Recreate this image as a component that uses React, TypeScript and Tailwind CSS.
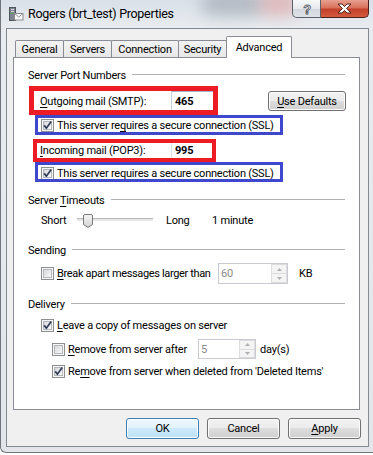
import React, { useId } from 'react';

// underline for access keys
const Ul: React.FC<{ children: React.ReactNode }> = ({ children }) => (
  <span className="underline decoration-1 underline-offset-[2px]">{children}</span>
);

const CheckBox: React.FC<{ checked?: boolean; className?: string }> = ({ checked, className }) => {
  const id = useId();
  return (
    <svg width="13" height="13" viewBox="0 0 13 13" className={`shrink-0 ${className ?? ''}`}>
      <defs>
        <linearGradient id={id} x1="0" y1="0" x2="1" y2="1">
          <stop offset="0" stopColor="#d4d6d9" />
          <stop offset="1" stopColor="#fbfbfb" />
        </linearGradient>
      </defs>
      <rect x="0.5" y="0.5" width="12" height="12" fill="#f6f6f6" stroke="#8e8f8f" />
      <rect x="2.5" y="2.5" width="8" height="8" fill={`url(#${id})`} stroke="#b4b8bd" />
      {checked && (
        <path d="M3.2 6.4 L5.4 9.2 L10.2 2.6" fill="none" stroke="#2f3a58" strokeWidth="1.7" />
      )}
    </svg>
  );
};

const Btn: React.FC<{ className?: string; primary?: boolean; children: React.ReactNode }> = ({
  className,
  primary,
  children,
}) => (
  <div
    className={`flex items-center justify-center rounded-[3px] border shadow-[inset_0_0_0_1px_#fcfcfc] ${
      primary
        ? 'border-[#3c7fb1] bg-[linear-gradient(180deg,#eef8fe_0%,#e0f2fc_50%,#cdeafb_50%,#bde1f5_100%)]'
        : 'border-[#707070] bg-[linear-gradient(180deg,#f2f2f2_0%,#ebebeb_50%,#dddddd_50%,#cfcfcf_100%)]'
    } ${className ?? ''}`}
  >
    {children}
  </div>
);

const SpinBox: React.FC<{ value: string; className?: string }> = ({ value, className }) => (
  <div className={`flex border border-[#c9cbd0] bg-white ${className ?? ''}`}>
    <span className="flex-1 flex items-center pl-[2px] text-[#8a8a8a]">{value}</span>
    <div className="w-[16px] flex flex-col">
      <div className="flex-1 flex items-center justify-center border border-[#dcdcdc] bg-[#f4f4f4]">
        <svg width="5" height="3" viewBox="0 0 5 3">
          <path d="M0 3 L2.5 0 L5 3 Z" fill="#b0b0b0" />
        </svg>
      </div>
      <div className="flex-1 flex items-center justify-center border border-t-0 border-[#dcdcdc] bg-[#f4f4f4]">
        <svg width="5" height="3" viewBox="0 0 5 3">
          <path d="M0 0 L2.5 3 L5 0 Z" fill="#b0b0b0" />
        </svg>
      </div>
    </div>
  </div>
);

const GroupHead: React.FC<{ className: string; children: React.ReactNode }> = ({ className, children }) => (
  <div className={`flex items-center h-[14px] pl-[14px] pr-[14px] ${className}`}>
    <span>{children}</span>
    <div className="flex-1 h-px bg-[#b0b0b0] ml-[6px] -mt-[1px]" />
  </div>
);

const TitleIcon = () => (
  <svg width="16" height="16" viewBox="0 0 16 16">
    <rect x="1.5" y="1.5" width="6" height="13" fill="#7d848d" stroke="#4f555c" />
    <rect x="3" y="3" width="3" height="1" fill="#d6dade" />
    <rect x="3" y="5" width="3" height="1" fill="#d6dade" />
    <rect x="3" y="7" width="2" height="1" fill="#55b04a" />
    <rect x="6.5" y="7.5" width="8.5" height="6.5" fill="#f7f7f7" stroke="#8c8c8c" />
    <path d="M6.5 7.5 L10.75 11 L15 7.5" fill="none" stroke="#9a9a9a" />
  </svg>
);

const tabs = [
  { label: 'General', cls: 'w-[49px]' },
  { label: 'Servers', cls: 'w-[49px] -ml-px' },
  { label: 'Connection', cls: 'w-[68px] -ml-px' },
  { label: 'Security', cls: 'w-[49px] -ml-px' },
];

export default function App() {
  return (
    <div className="w-[373px] h-[455px] bg-white overflow-hidden font-['Roboto',sans-serif] text-[11px] tracking-[-0.22px] leading-none text-black whitespace-nowrap">
      <div className="relative w-[373px] h-[453px] flex flex-col border-l border-b border-[#6f757c] rounded-bl-[6px] overflow-hidden bg-[linear-gradient(180deg,#d9e0e8_0px,#e8ecf0_28px,#e2e5e9_100%)]">
        {/* blurred glass behind the caption */}
        <div className="absolute left-[200px] top-[-8px] w-[64px] h-[24px] rounded-full bg-[#98a0aa] opacity-60 blur-[8px]" />
        <div className="absolute left-[258px] top-[-8px] w-[40px] h-[24px] rounded-full bg-[#e2a8a8] opacity-70 blur-[8px]" />

        {/* caption */}
        <div className="relative flex items-start h-[28px]">
          <div className="flex items-center h-[28px] pl-[7px]">
            <TitleIcon />
            <span className="ml-[4px] text-[12.5px] tracking-[-0.3px]">Rogers (brt_test) Properties</span>
          </div>
          <div className="flex-1" />
          <div className="flex mr-[4px]">
            <div className="w-[29px] h-[18px] flex items-center justify-center border border-t-0 border-[#5b6169] rounded-bl-[5px] bg-[linear-gradient(180deg,#f7f8f9_0%,#e6e9ed_50%,#d2d7dd_51%,#dfe3e8_100%)]">
              <svg width="12" height="14" viewBox="0 0 12 14">
                <text x="6" y="12" textAnchor="middle" fontSize="13" fontWeight="700" fontFamily="Liberation Sans, sans-serif" fill="#fff" stroke="#5a606a" strokeWidth="0.9">?</text>
              </svg>
            </div>
            <div className="w-[48px] h-[18px] flex items-center justify-center border border-t-0 border-l-0 border-[#4a2119] rounded-br-[5px] bg-[linear-gradient(180deg,#e8a08f_0%,#d9725c_45%,#c2412a_55%,#d45b3f_100%)]">
              <svg width="15" height="11" viewBox="0 0 15 11">
                <path d="M1 1 H5 L7.5 3.6 L10 1 H14 L9.6 5.5 L14 10 H10 L7.5 7.4 L5 10 H1 L5.4 5.5 Z" fill="#fff" stroke="#4a2118" strokeWidth="1" strokeLinejoin="round" />
              </svg>
            </div>
          </div>
        </div>

        {/* client area */}
        <div className="relative ml-[5px] w-[363px] h-[419px] border border-[#838a93] bg-[#f0f0f0] flex flex-col">
          {/* tab strip */}
          <div className="h-[28px] flex items-end pl-[8px]">
            {tabs.map(t => (
              <div
                key={t.label}
                className={`h-[17px] flex items-center justify-center border border-b-0 border-[#898c95] rounded-t-[2px] bg-[linear-gradient(180deg,#f3f3f3_0%,#e7e7e7_100%)] ${t.cls}`}
              >
                {t.label}
              </div>
            ))}
            <div className="relative z-10 -ml-px -mb-px w-[66px] h-[22px] flex justify-center pt-[5px] border border-b-0 border-[#898c95] rounded-t-[2px] bg-white">
              Advanced
            </div>
          </div>

          {/* tab page */}
          <div className="relative ml-[6px] w-[347px] h-[353px] border border-[#898c95] bg-white">
            <GroupHead className="mt-[10px]">Server Port Numbers</GroupHead>

            <div className="mt-[9px] h-[20px] flex items-center">
              <span className="ml-[26px] w-[131px]">
                <Ul>O</Ul>utgoing mail (SMTP):
              </span>
              <div className="w-[43px] h-[20px] flex items-center pl-[3px] font-bold border border-[#c3d3e3] border-t-[#9fb6cd] bg-white">
                465
              </div>
              <Btn className="ml-[54px] w-[78px] h-[20px]">
                <Ul>U</Ul>se Defaults
              </Btn>
            </div>

            <div className="mt-[7px] h-[15px] flex items-center">
              <CheckBox checked className="ml-[27px]" />
              <span className="ml-[3px]">
                This server re<Ul>q</Ul>uires a secure connection (SSL)
              </span>
            </div>

            <div className="mt-[7px] h-[20px] flex items-center">
              <span className="ml-[26px] w-[131px]">
                <Ul>I</Ul>ncoming mail (POP3):
              </span>
              <div className="w-[43px] h-[20px] flex items-center pl-[3px] font-bold border border-[#dfe3e8] border-t-[#abadb3] bg-white">
                995
              </div>
            </div>

            <div className="mt-[6px] h-[15px] flex items-center">
              <CheckBox checked className="ml-[27px]" />
              <span className="ml-[3px]">
                This server requires a secure <Ul>c</Ul>onnection (SSL)
              </span>
            </div>

            <GroupHead className="mt-[12px]">
              Server <Ul>T</Ul>imeouts
            </GroupHead>

            <div className="mt-[5px] h-[16px] flex items-center">
              <span className="ml-[27px] w-[36px]">Short</span>
              <div className="relative w-[76px] h-[16px]">
                <div className="absolute left-0 right-0 top-[6px] h-[3px] border-t border-[#b9b9b9] border-b-white bg-[#e7e7e7]" />
                <svg className="absolute left-[6px] top-[2px]" width="10" height="14" viewBox="0 0 10 14">
                  <defs>
                    <linearGradient id="thumb" x1="0" y1="0" x2="0" y2="1">
                      <stop offset="0" stopColor="#f7f7f7" />
                      <stop offset="1" stopColor="#d2d2d2" />
                    </linearGradient>
                  </defs>
                  <path d="M0.5 2 Q0.5 0.5 2 0.5 H8 Q9.5 0.5 9.5 2 V10.5 L5 13.5 L0.5 10.5 Z" fill="url(#thumb)" stroke="#7c7c7c" />
                </svg>
              </div>
              <span className="ml-[13px] w-[46px]">Long</span>
              <span>1 minute</span>
            </div>

            <GroupHead className="mt-[15px]">Sending</GroupHead>

            <div className="mt-[6px] h-[21px] flex items-center">
              <CheckBox className="ml-[27px]" />
              <span className="ml-[3px] w-[161px] shrink-0 tracking-[-0.35px]">
                <Ul>B</Ul>reak apart messages larger than
              </span>
              <SpinBox value="60" className="w-[70px] h-[21px] shrink-0" />
              <span className="ml-[11px]">KB</span>
            </div>

            <GroupHead className="mt-[13px]">Delivery</GroupHead>

            <div className="mt-[7px] h-[14px] flex items-center">
              <CheckBox checked className="ml-[27px]" />
              <span className="ml-[3px]">
                <Ul>L</Ul>eave a copy of messages on server
              </span>
            </div>

            <div className="mt-[7px] h-[20px] flex items-center">
              <CheckBox className="ml-[38px]" />
              <span className="ml-[3px] w-[130px] shrink-0">
                <Ul>R</Ul>emove from server after
              </span>
              <SpinBox value="5" className="w-[58px] h-[20px] shrink-0" />
              <span className="ml-[4px]">day(s)</span>
            </div>

            <div className="mt-[5px] h-[14px] flex items-center">
              <CheckBox checked className="ml-[38px]" />
              <span className="ml-[3px]">
                Re<Ul>m</Ul>ove from server when deleted from 'Deleted Items'
              </span>
            </div>

            {/* red / blue annotation frames drawn over the dialog */}
            <div className="pointer-events-none absolute left-[15px] top-[28px] w-[189px] h-[29px] border-[5px] border-[#ed1c24]" />
            <div className="pointer-events-none absolute left-[21px] top-[57px] w-[248px] h-[20px] border-[3px] border-[#3f48cc]" />
            <div className="pointer-events-none absolute left-[19px] top-[81px] w-[183px] h-[23px] border-[4px] border-[#ed1c24]" />
            <div className="pointer-events-none absolute left-[21px] top-[104px] w-[248px] h-[20px] border-[3px] border-[#3f48cc]" />
          </div>

          {/* dialog buttons */}
          <div className="mt-[8px] flex justify-end gap-[8px] pr-[7px]">
            <Btn primary className="w-[73px] h-[21px]">OK</Btn>
            <Btn className="w-[73px] h-[21px]">Cancel</Btn>
            <Btn className="w-[73px] h-[21px]">
              <Ul>A</Ul>pply
            </Btn>
          </div>
        </div>
      </div>
    </div>
  );
}
